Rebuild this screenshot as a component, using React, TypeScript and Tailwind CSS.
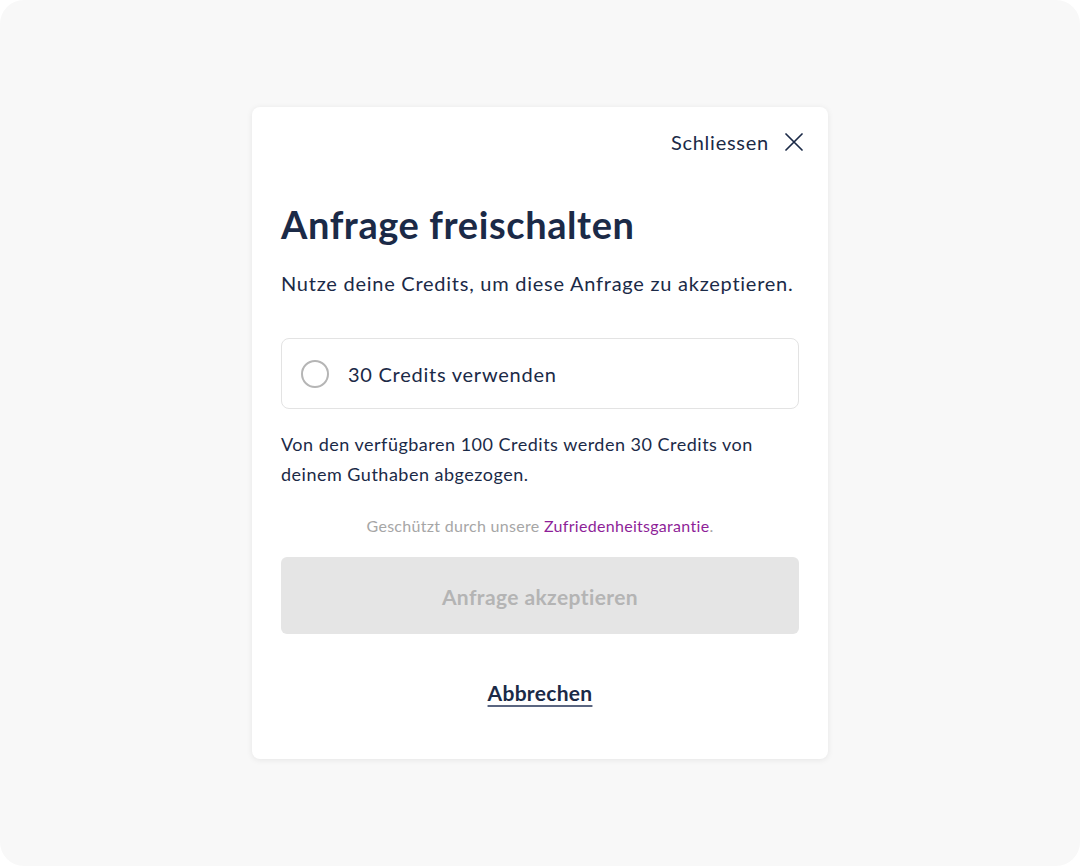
// Modal: Anfrage freischalten
export default function App() {
    return (
        <div className="h-[866px] w-[1080px] bg-white" style={{ fontFamily: "Lato, 'Open Sans', sans-serif" }}>
            <div className="flex h-full w-full items-center justify-center rounded-[24px] bg-[#f8f8f8]">
                <div className="flex w-[576px] flex-col rounded-lg bg-white px-[29px] pb-[52px] pt-[23px] shadow-[0_1px_6px_rgba(0,0,0,0.08)]">
                    {/* Schliessen */}
                    <div className="-mr-[4px] flex h-6 items-center justify-end gap-[16px] text-[20px] tracking-[0.75px] text-[#1b2a47]">
                        <span>Schliessen</span>
                        <svg width="18" height="18" viewBox="0 0 18 18" fill="none" stroke="currentColor" strokeWidth="1.7" strokeLinecap="round">
                            <path d="M1 1L17 17M17 1L1 17" />
                        </svg>
                    </div>

                    <h1 className="mt-[48px] text-[38px] font-bold leading-[44px] tracking-[0.6px] text-[#1b2a47]">
                        Anfrage freischalten
                    </h1>
                    <p className="mt-[23px] text-[20px] leading-[28px] tracking-[0.75px] text-[#1b2a47]">
                        Nutze deine Credits, um diese Anfrage zu akzeptieren.
                    </p>

                    {/* Option */}
                    <label className="mt-[41px] flex h-[71px] items-center rounded-lg border border-[#e3e3e3] px-[19px]">
                        <span className="h-[28px] w-[28px] rounded-full border-2 border-[#b5b5b5]" />
                        <span className="ml-[19px] text-[20px] tracking-[0.75px] text-[#1b2a47]">30 Credits verwenden</span>
                    </label>

                    <p className="mt-[20px] pr-[20px] text-[18px] leading-[30px] tracking-[0.5px] text-[#1b2a47]">
                        Von den verfügbaren 100 Credits werden 30 Credits von deinem Guthaben abgezogen.
                    </p>

                    <p className="mt-[26px] text-center text-[16px] leading-[22px] tracking-[0.3px] text-[#a6a6a6]">
                        Geschützt durch unsere <span className="text-[#8e1f98]">Zufriedenheitsgarantie</span>.
                    </p>

                    <button className="mt-[20px] flex h-[77px] items-center justify-center rounded-md bg-[#e5e5e5] pt-[2px] text-[21px] font-bold tracking-[0.4px] text-[#b4b4b4]">
                        Anfrage akzeptieren
                    </button>

                    <div className="mt-[45px] text-center">
                        <span className="text-[21px] font-bold leading-[28px] tracking-[0.3px] text-[#1b2a47] underline decoration-[#5a6580] decoration-[1.5px] underline-offset-[4px]">
                            Abbrechen
                        </span>
                    </div>
                </div>
            </div>
        </div>
    );
}
